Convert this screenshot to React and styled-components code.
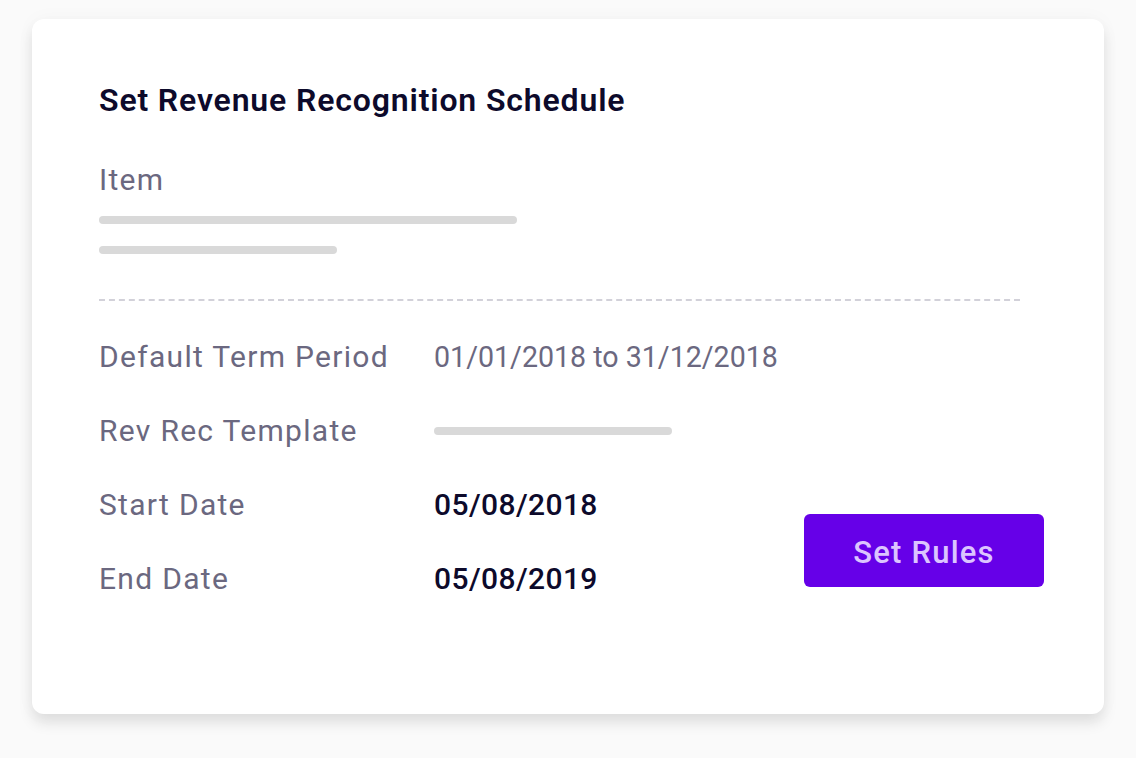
import styled, { createGlobalStyle } from "styled-components";

const Global = createGlobalStyle`
  html, body {
    margin: 0;
    background: #fafafa;
    font-family: Roboto, "Liberation Sans", sans-serif;
  }
`;

const Page = styled.div`
  width: 1136px;
  height: 758px;
  padding: 19px 32px 0 32px;
  box-sizing: border-box;
`;

const Card = styled.div`
  width: 1072px;
  height: 695px;
  box-sizing: border-box;
  background: #fff;
  border-radius: 12px;
  box-shadow: 0 9px 14px rgba(0, 0, 0, 0.1), 0 0 20px rgba(0, 0, 0, 0.03);
  padding: 63px 60px 0 67px;
  display: flex;
  flex-direction: column;
`;

const Title = styled.h1`
  margin: 0;
  font-size: 32px;
  line-height: 36px;
  font-weight: 600;
  letter-spacing: 0.85px;
  color: #0d0a2b;
`;

const Label = styled.div`
  font-size: 30px;
  line-height: 36px;
  letter-spacing: 1.3px;
  color: #6b6880;
  white-space: nowrap;
`;

const ItemLabel = styled(Label)`
  margin-top: 44px;
`;

const Bar = styled.div`
  width: ${(p) => p.$w}px;
  height: 8px;
  border-radius: 4px;
  background: #d9d9d9;
  margin-top: ${(p) => p.$mt || 0}px;
`;

const Divider = styled.div`
  margin: 45px 24px 0 0;
  border-top: 2px dashed #d2d1d9;
  height: 0;
`;

const Bottom = styled.div`
  display: flex;
  align-items: flex-start;
  margin-top: 38px;
`;

const Rows = styled.div`
  display: grid;
  grid-template-columns: 335px auto;
  row-gap: 38px;
  align-items: center;
  flex: 1;
`;

const Value = styled.div`
  font-size: ${(p) => (p.$strong ? 30 : 28.6)}px;
  letter-spacing: ${(p) => (p.$strong ? 0.4 : 0)}px;
  line-height: 36px;
  color: ${(p) => (p.$strong ? "#0d0a2b" : "#6b6880")};
  font-weight: ${(p) => (p.$strong ? 500 : 400)};
  white-space: nowrap;
`;

const Button = styled.button`
  width: 240px;
  height: 73px;
  border: none;
  border-radius: 6px;
  background: #6600e8;
  color: #dcc4ff;
  font-family: inherit;
  font-size: 31px;
  letter-spacing: 1.2px;
  font-weight: 500;
  padding-top: 4px;
  margin-top: 175px;
  cursor: pointer;
`;

export default function App() {
  return (
    <>
      <Global />
      <Page>
        <Card>
          <Title>Set Revenue Recognition Schedule</Title>
          <ItemLabel>Item</ItemLabel>
          <Bar $w={418} $mt={18} />
          <Bar $w={238} $mt={22} />
          <Divider />
          <Bottom>
            <Rows>
              <Label>Default Term Period</Label>
              <Value>01/01/2018 to 31/12/2018</Value>
              <Label>Rev Rec Template</Label>
              <Bar $w={238} />
              <Label>Start Date</Label>
              <Value $strong>05/08/2018</Value>
              <Label>End Date</Label>
              <Value $strong>05/08/2019</Value>
            </Rows>
            <Button>Set Rules</Button>
          </Bottom>
        </Card>
      </Page>
    </>
  );
}
